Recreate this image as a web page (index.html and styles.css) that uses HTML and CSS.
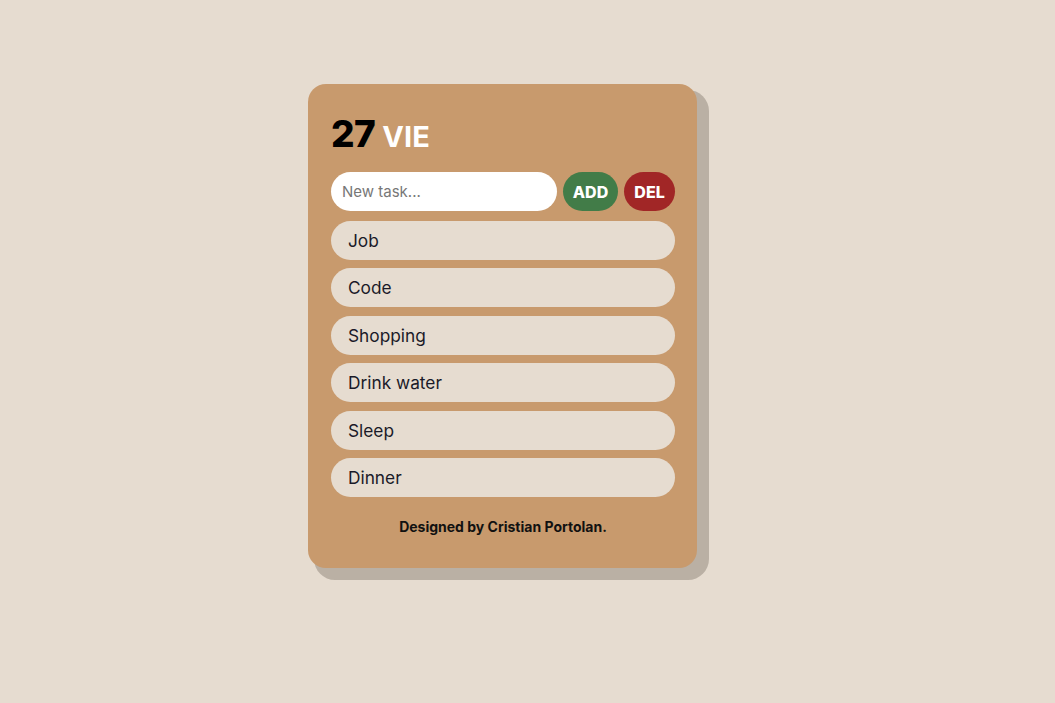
FILE: index.html
```html
<!DOCTYPE html>
<html lang="en">
<head>
<meta charset="utf-8">
<title>Todo</title>
<link rel="stylesheet" href="styles.css">
</head>
<body>
<main class="page">
  <section class="card">
    <h1 class="date"><span class="day">27</span><span class="weekday">VIE</span></h1>
    <form class="new-task">
      <input class="task-input" type="text" placeholder="New task...">
      <button class="btn btn-add" type="button">ADD</button>
      <button class="btn btn-del" type="button">DEL</button>
    </form>
    <ul class="tasks">
      <li class="task">Job</li>
      <li class="task">Code</li>
      <li class="task">Shopping</li>
      <li class="task">Drink water</li>
      <li class="task">Sleep</li>
      <li class="task">Dinner</li>
    </ul>
    <p class="credit">Designed by Cristian Portolan.</p>
  </section>
</main>
</body>
</html>
```
FILE: styles.css
```css
* { box-sizing: border-box; }
html, body { margin: 0; padding: 0; }
body {
  background: #e6dcd0;
  font-family: Inter, "Noto Sans", sans-serif;
  width: 1055px;
  height: 703px;
  overflow: hidden;
}
.page {
  display: flex;
  justify-content: flex-start;
  padding-top: 84px;
  padding-left: 308px;
}
.card {
  width: 389px;
  height: 484px;
  background: #c89a6d;
  border-radius: 18px;
  box-shadow: 9px 9px 0 3px #bab0a4;
  padding: 28px 22px 0 23px;
  display: flex;
  flex-direction: column;
}
.date {
  margin: 0;
  display: flex;
  align-items: baseline;
  gap: 7px;
  line-height: 44px;
  height: 44px;
}
.day {
  font-size: 37px;
  font-weight: 800;
  color: #000;
  letter-spacing: -0.5px;
}
.weekday {
  font-size: 29px;
  font-weight: 700;
  color: #fff;
}
.new-task {
  margin: 16px 0 0;
  display: flex;
  gap: 6px;
  height: 39px;
}
.task-input {
  width: 226px;
  height: 39px;
  border: none;
  border-radius: 20px;
  background: #fff;
  padding: 0 11px;
  font-family: inherit;
  font-size: 15px;
  color: #333;
  outline: none;
}
.task-input::placeholder { color: #777; }
.btn {
  height: 39px;
  border: none;
  border-radius: 20px;
  color: #fff;
  font-family: inherit;
  font-size: 16px;
  font-weight: 800;
  padding: 0;
}
.btn-add { width: 55px; background: #427c48; }
.btn-del { width: 51px; background: #a12626; }
.tasks {
  list-style: none;
  margin: 10px 0 0;
  padding: 0;
  display: flex;
  flex-direction: column;
  gap: 8.4px;
}
.task {
  height: 39px;
  border-radius: 20px;
  background: #e6dcd0;
  padding: 0 17px;
  display: flex;
  align-items: center;
  font-size: 17.3px;
  color: #1a1a28;
}
.credit {
  margin: 21px 0 0;
  text-align: center;
  font-size: 14px;
  font-weight: 700;
  color: #111;
}
```
